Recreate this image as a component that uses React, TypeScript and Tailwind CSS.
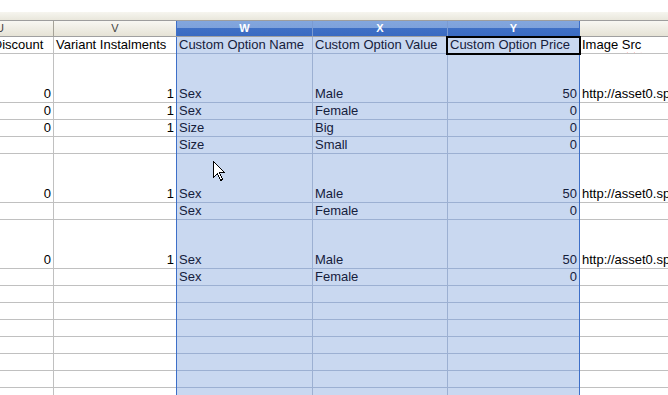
import React from "react";

type Row = { h: string; tall?: boolean; cells: string[] };

// column widths include the right grid line
const cols = [
  { key: "U", w: "w-[107px]", sel: false, num: true },
  { key: "V", w: "w-[123px]", sel: false, num: true },
  { key: "W", w: "w-[136px]", sel: true, num: false },
  { key: "X", w: "w-[135px]", sel: true, num: false },
  { key: "Y", w: "w-[132px]", sel: true, num: true },
  { key: "Z", w: "w-[300px]", sel: false, num: false },
];

const url = "http://asset0.spreecommerce.com/images/products";

const rows: Row[] = [
  { h: "h-[17px]", cells: ["Variant Discount", "Variant Instalments", "Custom Option Name", "Custom Option Value", "Custom Option Price", "Image Src"] },
  { h: "h-[49px]", tall: true, cells: ["0", "1", "Sex", "Male", "50", url] },
  { h: "h-[17px]", cells: ["0", "1", "Sex", "Female", "0", ""] },
  { h: "h-[17px]", cells: ["0", "1", "Size", "Big", "0", ""] },
  { h: "h-[17px]", cells: ["", "", "Size", "Small", "0", ""] },
  { h: "h-[49px]", tall: true, cells: ["0", "1", "Sex", "Male", "50", url] },
  { h: "h-[17px]", cells: ["", "", "Sex", "Female", "0", ""] },
  { h: "h-[49px]", tall: true, cells: ["0", "1", "Sex", "Male", "50", url] },
  { h: "h-[17px]", cells: ["", "", "Sex", "Female", "0", ""] },
  ...Array.from({ length: 7 }, () => ({ h: "h-[17px]", cells: ["", "", "", "", "", ""] })),
];

const borderFor = (i: number) => {
  if (i === 1 || i === 4) return "border-r border-r-[#3d6fc8]";
  if (cols[i].sel) return "border-r border-r-[#9cb0d2]";
  return "border-r border-r-[#c0c0c0]";
};

const Cell = ({ i, text, row, first }: { i: number; text: string; row: Row; first: boolean }) => {
  const col = cols[i];
  const isNum = !first && col.num && text !== "";
  return (
    <div
      className={`${col.w} shrink-0 h-full flex ${row.tall ? "items-end" : "items-center"} ${isNum ? "justify-end pr-[2px]" : "pl-[2px]"} ${borderFor(i)} ${col.sel ? "bg-[#c9d8f0] text-[#15203c]" : "bg-white text-black"} whitespace-nowrap overflow-visible leading-[16px]`}
    >
      {text === "Image Src" ? (
        <span>
          Image <span className="underline decoration-wavy decoration-[#ff0000] decoration-1 underline-offset-[3px]">Src</span>
        </span>
      ) : (
        text
      )}
    </div>
  );
};

export default function App() {
  return (
    <div className="w-[668px] h-[395px] overflow-hidden bg-white relative font-['Liberation_Sans',Arial,sans-serif] text-[13px]">
      <div className="h-[12px] bg-white" />
      <div className="h-[8px] bg-linear-to-b from-[#f6f5ef] to-[#e9e7dc]" />

      <div className="ml-[-53px] flex h-[17px] border-t border-t-[#9d9d9d] border-b border-b-[#a0a0a0]">
        {cols.map((c, i) => (
          <div
            key={c.key}
            className={`${c.w} shrink-0 h-full flex items-center justify-center text-[11px] ${
              c.sel
                ? "bg-[linear-gradient(#82a6de_0,#7ea2db_45%,#3f70c6_45%,#3a6bc2_100%)] text-white font-bold"
                : "bg-linear-to-b from-[#f8f7f2] to-[#e6e3d6] text-[#404040]"
            } ${i === 1 || i === 4 ? "border-r border-r-[#3d6fc8]" : c.sel ? "border-r border-r-[#7b9bd2]" : "border-r border-r-[#a6a398]"}`}
          >
            {c.key}
          </div>
        ))}
      </div>

      {rows.map((r, ri) => (
        <div key={ri} className={`ml-[-53px] flex ${r.h}`}>
          {r.cells.map((t, i) => (
            <div key={i} className={`${cols[i].w} shrink-0 h-full flex flex-col`}>
              <div className="flex-1 min-h-0 flex">
                <Cell i={i} text={t} row={r} first={ri === 0} />
              </div>
              <div className={`h-px w-full ${cols[i].sel ? "bg-[#9cb0d2]" : "bg-[#c0c0c0]"} ${i === 1 || i === 4 ? "border-r border-r-[#3d6fc8]" : ""}`} />
            </div>
          ))}
        </div>
      ))}

      {/* active cell */}
      <div className="absolute left-[446px] top-[36px] w-[135px] h-[19px] border-2 border-black pointer-events-none" />

      {/* mouse pointer */}
      <svg className="absolute left-[213px] top-[161px]" width="13" height="22" viewBox="0 0 13 22">
        <path
          d="M0.5 0.5 L0.5 16.5 L4.5 12.5 L7.5 19.5 L9.5 18.5 L6.5 11.5 L11.5 11.5 Z"
          fill="#ffffff"
          stroke="#000000"
          strokeWidth="1"
          shapeRendering="crispEdges"
        />
      </svg>
    </div>
  );
}
